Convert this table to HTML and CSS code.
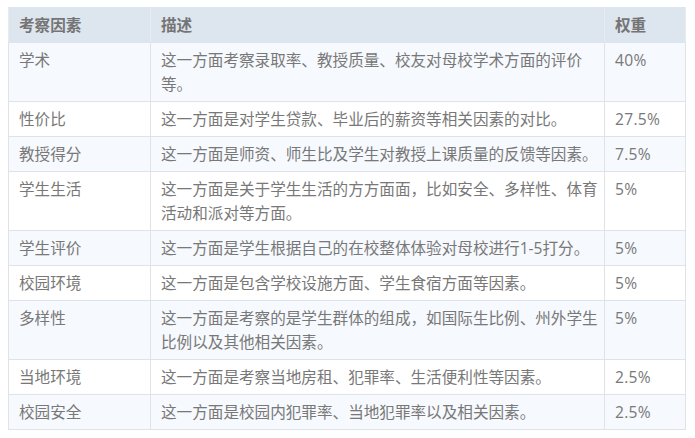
FILE: index.html
```html
<!DOCTYPE html>
<html lang="zh-CN">
<head>
<meta charset="utf-8">
<title>考察因素</title>
<link rel="stylesheet" href="styles.css">
</head>
<body>
<table class="factors">
  <colgroup>
    <col class="c-name">
    <col class="c-desc">
    <col class="c-weight">
  </colgroup>
  <thead>
    <tr><th>考察因素</th><th>描述</th><th>权重</th></tr>
  </thead>
  <tbody>
    <tr><td>学术</td><td>这一方面考察录取率、教授质量、校友对母校学术方面的评价等。</td><td>40%</td></tr>
    <tr><td>性价比</td><td>这一方面是对学生贷款、毕业后的薪资等相关因素的对比。</td><td>27.5%</td></tr>
    <tr><td>教授得分</td><td>这一方面是师资、师生比及学生对教授上课质量的反馈等因素。</td><td>7.5%</td></tr>
    <tr><td>学生生活</td><td>这一方面是关于学生生活的方方面面，比如安全、多样性、体育活动和派对等方面。</td><td>5%</td></tr>
    <tr><td>学生评价</td><td>这一方面是学生根据自己的在校整体体验对母校进行1-5打分。</td><td>5%</td></tr>
    <tr><td>校园环境</td><td>这一方面是包含学校设施方面、学生食宿方面等因素。</td><td>5%</td></tr>
    <tr><td>多样性</td><td>这一方面是考察的是学生群体的组成，如国际生比例、州外学生比例以及其他相关因素。</td><td>5%</td></tr>
    <tr><td>当地环境</td><td>这一方面是考察当地房租、犯罪率、生活便利性等因素。</td><td>2.5%</td></tr>
    <tr><td>校园安全</td><td>这一方面是校园内犯罪率、当地犯罪率以及相关因素。</td><td>2.5%</td></tr>
  </tbody>
</table>
</body>
</html>
```
FILE: styles.css
```css
html, body {
  margin: 0;
  padding: 0;
  background: #ffffff;
}
body {
  padding: 7px 0 0 8px;
  font-family: "Open Sans", "Noto Sans CJK SC", sans-serif;
  font-size: 15.6px;
  color: #787878;
}
.factors {
  border-collapse: collapse;
  table-layout: fixed;
  width: 677px;
}
.c-name { width: 142px; }
.c-desc { width: 454px; }
.c-weight { width: 81px; }
.factors th,
.factors td {
  border: 1px solid #dfe3e8;
  padding: 5px 3px 5px 10px;
  line-height: 24px;
  text-align: left;
  vertical-align: top;
  word-break: break-all;
}
.factors th {
  background: #dde5ef;
  color: #747474;
  font-weight: bold;
  border-color: #dde5ef #e8ecf1;
}
.factors td:last-child {
  letter-spacing: 0.3px;
}
.factors tbody tr:nth-child(odd) td {
  background: #f6f9fd;
}
.factors tbody tr:nth-child(even) td {
  background: #ffffff;
}
```
